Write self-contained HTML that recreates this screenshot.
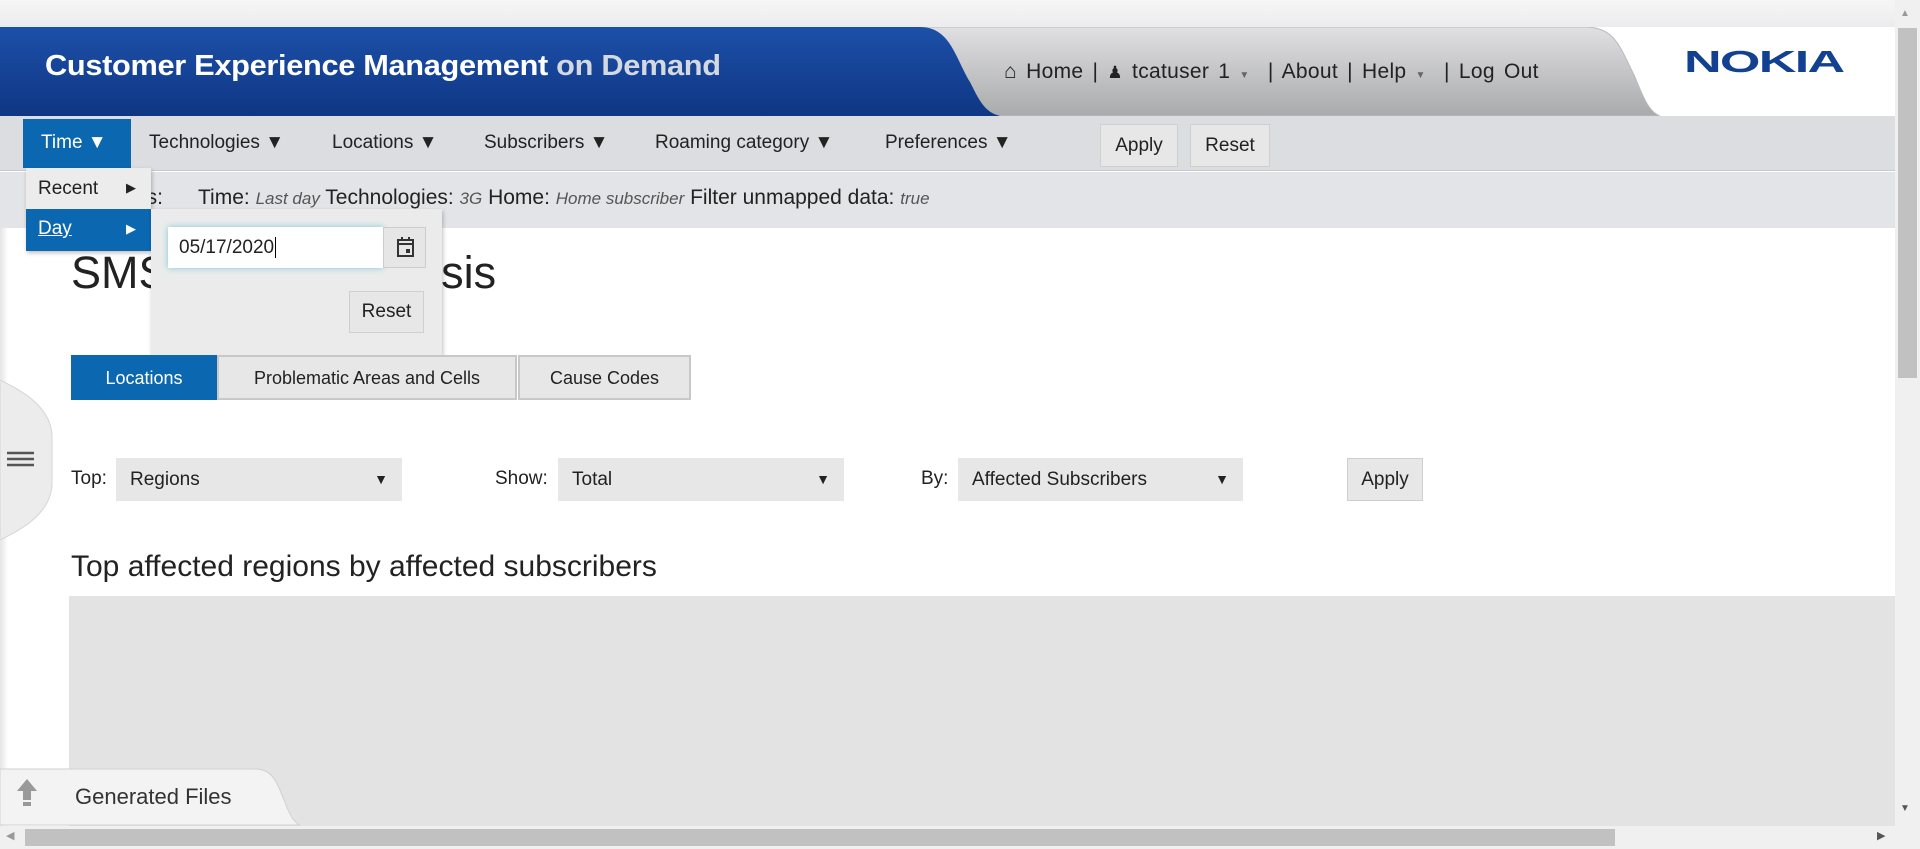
<!DOCTYPE html>
<html><head><meta charset="utf-8"><style>
*{box-sizing:border-box;margin:0;padding:0}
body{width:1920px;height:849px;overflow:hidden;background:#fff;font-family:"Liberation Sans",sans-serif;color:#222;position:relative}
.abs{position:absolute}
.top{left:0;top:0;width:1895px;height:27px;background:linear-gradient(#f6f6f6,#ececee)}
.hdr{left:0;top:27px;width:1895px;height:89px;background:#fff}
.title{left:45px;top:50px;font-size:29px;font-weight:bold;color:#fff;letter-spacing:-0.3px;transform:scaleX(1.06);transform-origin:left}
.title span{color:#d4d8e0}
.nav{left:0;top:116px;width:1895px;height:55px;background:#dcdde1;border-bottom:1px solid #c8c9cc}
.nav .it{position:absolute;top:16px;font-size:19px;color:#222}
.btn{position:absolute;background:#e8e7e8;border:1px solid #cfcfcf;font-size:19px;color:#222;text-align:center}
.fbar{left:0;top:172px;width:1895px;height:56px;background:#e3e4e8;font-size:21px;color:#222}
.fbar i{font-size:17px;color:#555}
.tab{position:absolute;top:355px;height:45px;font-size:18px;text-align:center;line-height:43px;background:#e8e7e8;border:2px solid #c8c8c8;color:#222}
.sel{position:absolute;top:458px;height:43px;background:#e8e7e8;font-size:19px;line-height:43px;padding-left:14px}
.sel b{position:absolute;right:14px;top:0;font-size:14px}
.lbl{position:absolute;top:468px;font-size:19px}
</style></head><body>
<div class="abs top"></div>
<div class="abs hdr"></div>
<svg class="abs" style="left:0;top:27px" width="1660" height="89">
<defs><linearGradient id="g" x1="0" y1="0" x2="0" y2="1"><stop offset="0" stop-color="#e0e0e2"/><stop offset="1" stop-color="#a9aaac"/></linearGradient>
<linearGradient id="b" x1="0" y1="0" x2="0" y2="1"><stop offset="0" stop-color="#1c50a8"/><stop offset="1" stop-color="#0f3684"/></linearGradient></defs>
<path d="M900 0 H1585 C1615 0 1620 20 1635 50 C1645 75 1650 85 1660 89 H900 Z" fill="url(#g)" stroke="#bbb"/>
<path d="M0 0 H920 C950 0 955 30 970 55 C980 75 985 85 1000 89 H0 Z" fill="url(#b)"/>
</svg>
<div class="abs title">Customer Experience Management <span>on Demand</span></div>
<div class="abs" style="left:1004px;top:60px;font-size:21px;color:#222;word-spacing:3px;letter-spacing:0.3px">&#8962; Home | <span style="font-size:17px">&#9823;</span> tcatuser 1 <span style="font-size:10px;color:#666">▼</span> &nbsp;| About | Help <span style="font-size:10px;color:#666">▼</span> &nbsp;| Log Out</div>
<div class="abs" style="left:1684px;top:44px;font-size:31px;font-weight:bold;color:#124191;letter-spacing:-1px;transform:scaleX(1.68);transform-origin:left">NOKIA</div>
<div class="abs nav">
<div style="position:absolute;left:23px;top:3px;width:108px;height:49px;background:#0b68b0"></div>
<div class="it" style="left:41px;color:#fff">Time ▼</div>
<div class="it" style="left:149px">Technologies ▼</div>
<div class="it" style="left:332px">Locations ▼</div>
<div class="it" style="left:484px">Subscribers ▼</div>
<div class="it" style="left:655px">Roaming category ▼</div>
<div class="it" style="left:885px">Preferences ▼</div>
<div class="btn" style="left:1100px;top:8px;width:78px;height:43px;line-height:41px">Apply</div>
<div class="btn" style="left:1190px;top:8px;width:80px;height:43px;line-height:41px">Reset</div>
</div>
<div class="abs fbar"><div style="position:absolute;left:100px;top:14px">Filters:</div><div style="position:absolute;left:198px;top:14px;white-space:nowrap">Time: <i>Last day</i> Technologies: <i>3G</i> Home: <i>Home subscriber</i> Filter unmapped data: <i>true</i></div></div>
<div class="abs" style="left:71px;top:247px;font-size:45px;color:#222">SMS Failure Analysis</div>
<!-- dropdown -->
<div class="abs" style="left:26px;top:168px;width:125px;height:83px;background:#ececec;box-shadow:1px 2px 4px rgba(0,0,0,.25)">
<div style="position:absolute;left:12px;top:10px;font-size:19px">Recent</div><div style="position:absolute;left:100px;top:12px;font-size:13px">▶</div>
<div style="position:absolute;left:0;top:41px;width:125px;height:42px;background:#0b68b0;color:#fff"><span style="position:absolute;left:12px;top:9px;font-size:19px;text-decoration:underline">Day</span><span style="position:absolute;left:100px;top:12px;font-size:13px">▶</span></div>
</div>
<div class="abs" style="left:151px;top:209px;width:291px;height:146px;background:#ebebeb;box-shadow:1px 2px 4px rgba(0,0,0,.25)">
<div style="position:absolute;left:17px;top:18px;width:215px;height:41px;background:#fff;box-shadow:0 0 6px #7cc6dc;font-size:19px;line-height:41px;padding-left:11px">05/17/2020<span style="border-left:1px solid #000;margin-left:1px"></span></div>
<div style="position:absolute;left:232px;top:18px;width:43px;height:41px;background:#e6e6e6;border:1px solid #ccc">
<svg width="43" height="41" viewBox="0 0 43 41"><rect x="14" y="12" width="15" height="16" fill="none" stroke="#333" stroke-width="2"/><line x1="14" y1="16" x2="29" y2="16" stroke="#333" stroke-width="2"/><line x1="18" y1="9" x2="18" y2="13" stroke="#333" stroke-width="2"/><line x1="25" y1="9" x2="25" y2="13" stroke="#333" stroke-width="2"/><rect x="22" y="21" width="4" height="4" fill="#333"/></svg></div>
<div class="btn" style="left:198px;top:82px;width:75px;height:42px;line-height:40px">Reset</div>
</div>
<!-- tabs -->
<div class="tab" style="left:71px;width:146px;background:#0b68b0;border-color:#0b68b0;color:#fff">Locations</div>
<div class="tab" style="left:217px;width:300px">Problematic Areas and Cells</div>
<div class="tab" style="left:518px;width:173px">Cause Codes</div>
<!-- side handle -->
<div class="abs" style="left:0;top:228px;width:8px;height:598px;background:linear-gradient(90deg,#e4e4e4,#fff)"></div>
<svg class="abs" style="left:0;top:380px" width="60" height="160"><path d="M0 0 C20 10 50 25 52 55 V105 C50 135 20 150 0 160 Z" fill="#ececec" stroke="#d5d5d5"/><g stroke="#555" stroke-width="2.5"><line x1="7" y1="73" x2="34" y2="73"/><line x1="7" y1="79" x2="34" y2="79"/><line x1="7" y1="85" x2="34" y2="85"/></g></svg>
<div class="lbl" style="left:71px">Top:</div>
<div class="sel" style="left:116px;width:286px">Regions<b>▼</b></div>
<div class="lbl" style="left:495px">Show:</div>
<div class="sel" style="left:558px;width:286px">Total<b>▼</b></div>
<div class="lbl" style="left:921px">By:</div>
<div class="sel" style="left:958px;width:285px">Affected Subscribers<b>▼</b></div>
<div class="btn" style="left:1347px;top:458px;width:76px;height:43px;line-height:41px">Apply</div>
<div class="abs" style="left:71px;top:550px;font-size:30px">Top affected regions by affected subscribers</div>
<div class="abs" style="left:69px;top:596px;width:1826px;height:230px;background:#e3e3e3"></div>
<svg class="abs" style="left:0;top:767px" width="300" height="60"><path d="M0 2 H255 C275 2 278 20 285 35 C290 50 295 56 300 58 H0 Z" fill="#f3f3f3" stroke="#d0d0d0"/><path d="M27 12 L17 24 H23 V33 H31 V24 H37 Z M23 35 H31 V39 H23 Z" fill="#999"/></svg>
<div class="abs" style="left:75px;top:784px;font-size:22px;color:#333">Generated Files</div>
<!-- scrollbars -->
<div class="abs" style="left:1895px;top:0;width:25px;height:849px;background:#f0f0f0"></div>
<div class="abs" style="left:1898px;top:28px;width:19px;height:350px;background:#c1c1c1"></div>
<div class="abs" style="left:1900px;top:8px;font-size:10px;color:#999">▲</div>
<div class="abs" style="left:1900px;top:803px;font-size:10px;color:#555">▼</div>
<div class="abs" style="left:0;top:826px;width:1895px;height:23px;background:#f0f0f0"></div>
<div class="abs" style="left:25px;top:829px;width:1590px;height:17px;background:#c1c1c1"></div>
<div class="abs" style="left:6px;top:829px;font-size:11px;color:#999">◀</div>
<div class="abs" style="left:1877px;top:829px;font-size:11px;color:#555">▶</div>
</body></html>
